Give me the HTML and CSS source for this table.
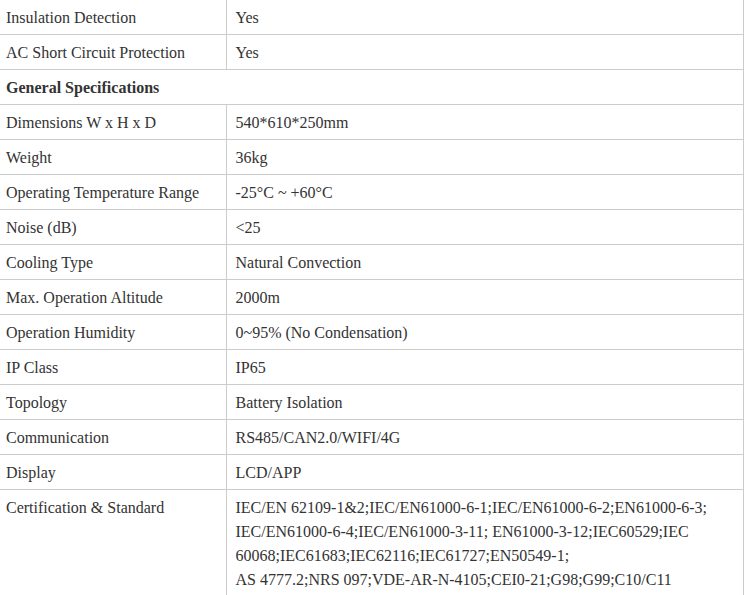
FILE: index.html
```html
<!DOCTYPE html>
<html>
<head>
<meta charset="utf-8">
<link rel="stylesheet" href="styles.css">
</head>
<body>
<table class="spec">
  <colgroup><col class="c1"><col class="c2"></colgroup>
  <tr><td>Insulation Detection</td><td>Yes</td></tr>
  <tr><td>AC Short Circuit Protection</td><td>Yes</td></tr>
  <tr class="head"><td colspan="2">General Specifications</td></tr>
  <tr><td>Dimensions W x H x D</td><td>540*610*250mm</td></tr>
  <tr><td>Weight</td><td>36kg</td></tr>
  <tr><td>Operating Temperature Range</td><td>-25°C ~ +60°C</td></tr>
  <tr><td>Noise (dB)</td><td>&lt;25</td></tr>
  <tr><td>Cooling Type</td><td>Natural Convection</td></tr>
  <tr><td>Max. Operation Altitude</td><td>2000m</td></tr>
  <tr><td>Operation Humidity</td><td>0~95% (No Condensation)</td></tr>
  <tr><td>IP Class</td><td>IP65</td></tr>
  <tr><td>Topology</td><td>Battery Isolation</td></tr>
  <tr><td>Communication</td><td>RS485/CAN2.0/WIFI/4G</td></tr>
  <tr><td>Display</td><td>LCD/APP</td></tr>
  <tr class="multi"><td>Certification &amp; Standard</td><td>IEC/EN 62109-1&amp;2;IEC/EN61000-6-1;IEC/EN61000-6-2;EN61000-6-3;<br>IEC/EN61000-6-4;IEC/EN61000-3-11; EN61000-3-12;IEC60529;IEC<br>60068;IEC61683;IEC62116;IEC61727;EN50549-1;<br>AS 4777.2;NRS 097;VDE-AR-N-4105;CEI0-21;G98;G99;C10/C11</td></tr>
</table>
</body>
</html>
```

FILE: styles.css
```css
html, body {
  margin: 0;
  padding: 0;
  background: #fff;
}
.spec {
  border-collapse: collapse;
  width: 744px;
  margin-top: -1px;
  font-family: "Liberation Serif", "Times New Roman", serif;
  font-size: 16px;
  color: #333;
  border-right: 1px solid #ccc;
}
.c1 { width: 226px; }
.spec td {
  border-top: 1px solid #ccc;
  border-bottom: 1px solid #ccc;
  padding: 6px 9px 4px;
  line-height: 24px;
  vertical-align: top;
  white-space: nowrap;
}
.spec td:first-child {
  padding-left: 6px;
  border-right: 1px solid #ccc;
}
.spec .head td {
  font-weight: bold;
  border-right: none;
}
```
